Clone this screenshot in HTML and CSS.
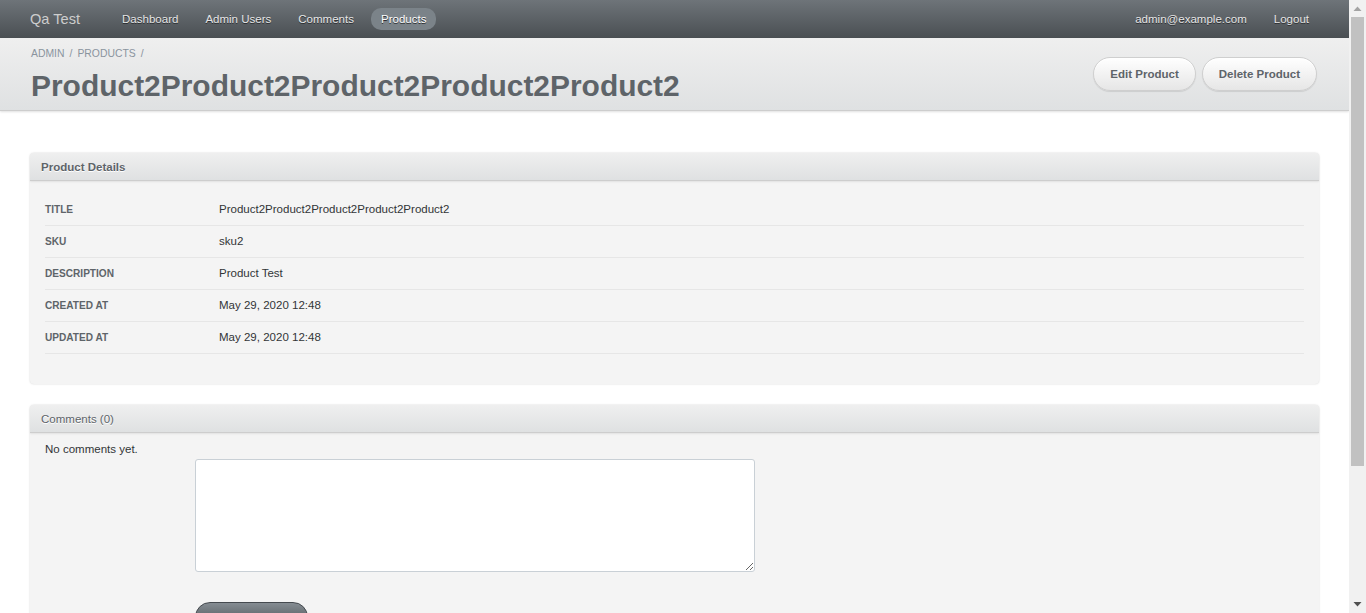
FILE: index.html
```html
<!DOCTYPE html>
<html lang="en">
<head>
<meta charset="utf-8">
<title>Product2Product2Product2Product2Product2 | Qa Test</title>
<link rel="stylesheet" href="styles.css">
</head>
<body class="active-admin">
  <div class="page">
    <header class="top-header">
      <div class="site-title">Qa Test</div>
      <nav class="tabs">
        <a class="tab" href="#">Dashboard</a>
        <a class="tab" href="#">Admin Users</a>
        <a class="tab" href="#">Comments</a>
        <a class="tab current" href="#">Products</a>
      </nav>
      <nav class="utility-nav">
        <a class="tab" href="#">admin@example.com</a>
        <a class="tab" href="#">Logout</a>
      </nav>
    </header>

    <div class="title-bar">
      <div class="title-left">
        <div class="breadcrumb">
          <a href="#">Admin</a><span class="sep">/</span><a href="#">Products</a><span class="sep">/</span>
        </div>
        <h2 class="page-title">Product2Product2Product2Product2Product2</h2>
      </div>
      <div class="action-items">
        <a class="light-button" href="#">Edit Product</a>
        <a class="light-button" href="#">Delete Product</a>
      </div>
    </div>

    <main class="main-content">
      <section class="panel">
        <h3 class="panel-header">Product Details</h3>
        <div class="panel-contents details">
          <table class="attributes">
            <tr><th>Title</th><td>Product2Product2Product2Product2Product2</td></tr>
            <tr><th>Sku</th><td>sku2</td></tr>
            <tr><th>Description</th><td>Product Test</td></tr>
            <tr><th>Created At</th><td>May 29, 2020 12:48</td></tr>
            <tr><th>Updated At</th><td>May 29, 2020 12:48</td></tr>
          </table>
        </div>
      </section>

      <section class="panel">
        <h3 class="panel-header normal">Comments (0)</h3>
        <div class="panel-contents comments">
          <span class="empty">No comments yet.</span>
          <form class="comment-form">
            <textarea class="comment-body"></textarea>
            <button class="dark-button" type="button">Add Comment</button>
          </form>
        </div>
      </section>
    </main>
  </div>

  <div class="scrollbar" aria-hidden="true">
    <div class="sb-arrow">
      <svg width="17" height="17" viewBox="0 0 17 17"><polygon points="4.5,11 12.5,11 8.5,6.5" fill="#a3a3a3"/></svg>
    </div>
    <div class="sb-thumb"></div>
    <div class="sb-arrow sb-down">
      <svg width="17" height="17" viewBox="0 0 17 17"><polygon points="4.5,6 12.5,6 8.5,10.5" fill="#505050"/></svg>
    </div>
  </div>
</body>
</html>
```
FILE: styles.css
```css
html, body {
  margin: 0;
  padding: 0;
}
html { overflow: hidden; }
body.active-admin {
  font-family: "Liberation Sans", Arial, Helvetica, sans-serif;
  font-size: 11.52px;
  line-height: 1.5;
  color: #323537;
  background: #fff;
}
.page {
  margin-right: 17px;
}
a { text-decoration: none; }

/* Fake scrollbar */
.scrollbar {
  position: fixed;
  top: 0;
  right: 0;
  width: 17px;
  height: 100vh;
  background: #f1f1f1;
  display: flex;
  flex-direction: column;
}
.sb-arrow {
  height: 17px;
  flex: none;
}
.sb-arrow svg { display: block; }
.sb-thumb {
  margin: 0 2px;
  height: 449px;
  background: #c1c1c1;
}
.sb-down { margin-top: auto; }

/* Header */
.top-header {
  height: 38px;
  display: flex;
  align-items: center;
  padding: 0 30px;
  background: linear-gradient(#6e7479, #4a4f53);
  box-sizing: border-box;
}
.site-title {
  color: #cdcdcd;
  font-size: 14.6px;
  line-height: 18px;
  margin-right: 32px;
}
.tabs, .utility-nav {
  display: flex;
  gap: 7px;
}
.utility-nav { margin-left: auto; }
.tab {
  color: #e6e6e6;
  line-height: 14px;
  padding: 4px 10px;
  border-radius: 10px;
  text-shadow: 0 1px 0 #2b2e31;
}
.tab.current {
  background: #7b8389;
  color: #fff;
}

/* Title bar */
.title-bar {
  display: flex;
  align-items: center;
  justify-content: space-between;
  padding: 9px 32px 9px 31px;
  background: linear-gradient(#efefef, #dfe1e2);
  border-bottom: 1px solid #cdcdcd;
  box-shadow: 0 1px 2px rgba(0,0,0,0.12);
}
.breadcrumb {
  font-size: 10.4px;
  line-height: 14px;
  text-transform: uppercase;
  color: #8a949e;
}
.breadcrumb a { color: #8a949e; }
.breadcrumb .sep { margin: 0 5px; }
.page-title {
  margin: 10px 0 0 0;
  font-size: 29.95px;
  line-height: 30px;
  font-weight: bold;
  color: #5e6469;
}
.action-items {
  display: flex;
  gap: 6px;
}
.light-button {
  display: block;
  height: 32px;
  line-height: 32px;
  padding: 0 16px;
  border: 1px solid #cfcfcf;
  border-radius: 200px;
  background: linear-gradient(#ffffff, #e6e6e6);
  box-shadow: 0 1px 1px rgba(0,0,0,0.1), inset 0 1px 0 #fff;
  color: #5e6469;
  font-weight: bold;
}

/* Main */
.main-content {
  padding: 42px 30px 30px;
}
.panel {
  background: #f4f4f4;
  border-radius: 4px;
  box-shadow: 0 0 2px rgba(0,0,0,0.18);
  margin-bottom: 21px;
}
.panel-header {
  margin: 0;
  padding: 5px 10px 4px 11px;
  line-height: 18px;
  font-size: 11.52px;
  font-weight: bold;
  color: #5e6469;
  text-shadow: 0 1px 0 #fff;
  background: linear-gradient(#efefef, #dfe1e2);
  border-bottom: 1px solid #cdcdcd;
  border-radius: 4px 4px 0 0;
  box-shadow: 0 1px 2px rgba(0,0,0,0.08);
}
.panel-header.normal { font-weight: normal; }

.panel-contents.details {
  padding: 13px 15px 30px;
}
.attributes {
  width: 100%;
  border-collapse: collapse;
}
.attributes th, .attributes td {
  height: 31px;
  padding: 0;
  border-bottom: 1px solid #e6e6e6;
  text-align: left;
  vertical-align: middle;
}
.attributes th {
  width: 174px;
  font-size: 10.1px;
  font-weight: bold;
  text-transform: uppercase;
  color: #5e6469;
}

.panel-contents.comments {
  padding: 8px 15px 40px;
}
.empty {
  display: block;
  line-height: 17px;
}
.comment-form {
  display: flex;
  flex-direction: column;
  align-items: flex-start;
  padding-left: 150px;
  margin-top: 1px;
}
.comment-body {
  width: 560px;
  height: 113px;
  box-sizing: border-box;
  border: 1px solid #c9d0d6;
  border-radius: 3px;
  background: #fff;
  margin: 0;
}
.dark-button {
  margin-top: 30px;
  padding: 6px 16px 6px;
  font-family: inherit;
  font-size: 11.52px;
  line-height: 16px;
  font-weight: bold;
  color: #fff;
  text-shadow: 0 1px 0 #000;
  border: 1px solid #454a4f;
  border-radius: 200px;
  background: linear-gradient(#858c92, #41464a);
}
```
